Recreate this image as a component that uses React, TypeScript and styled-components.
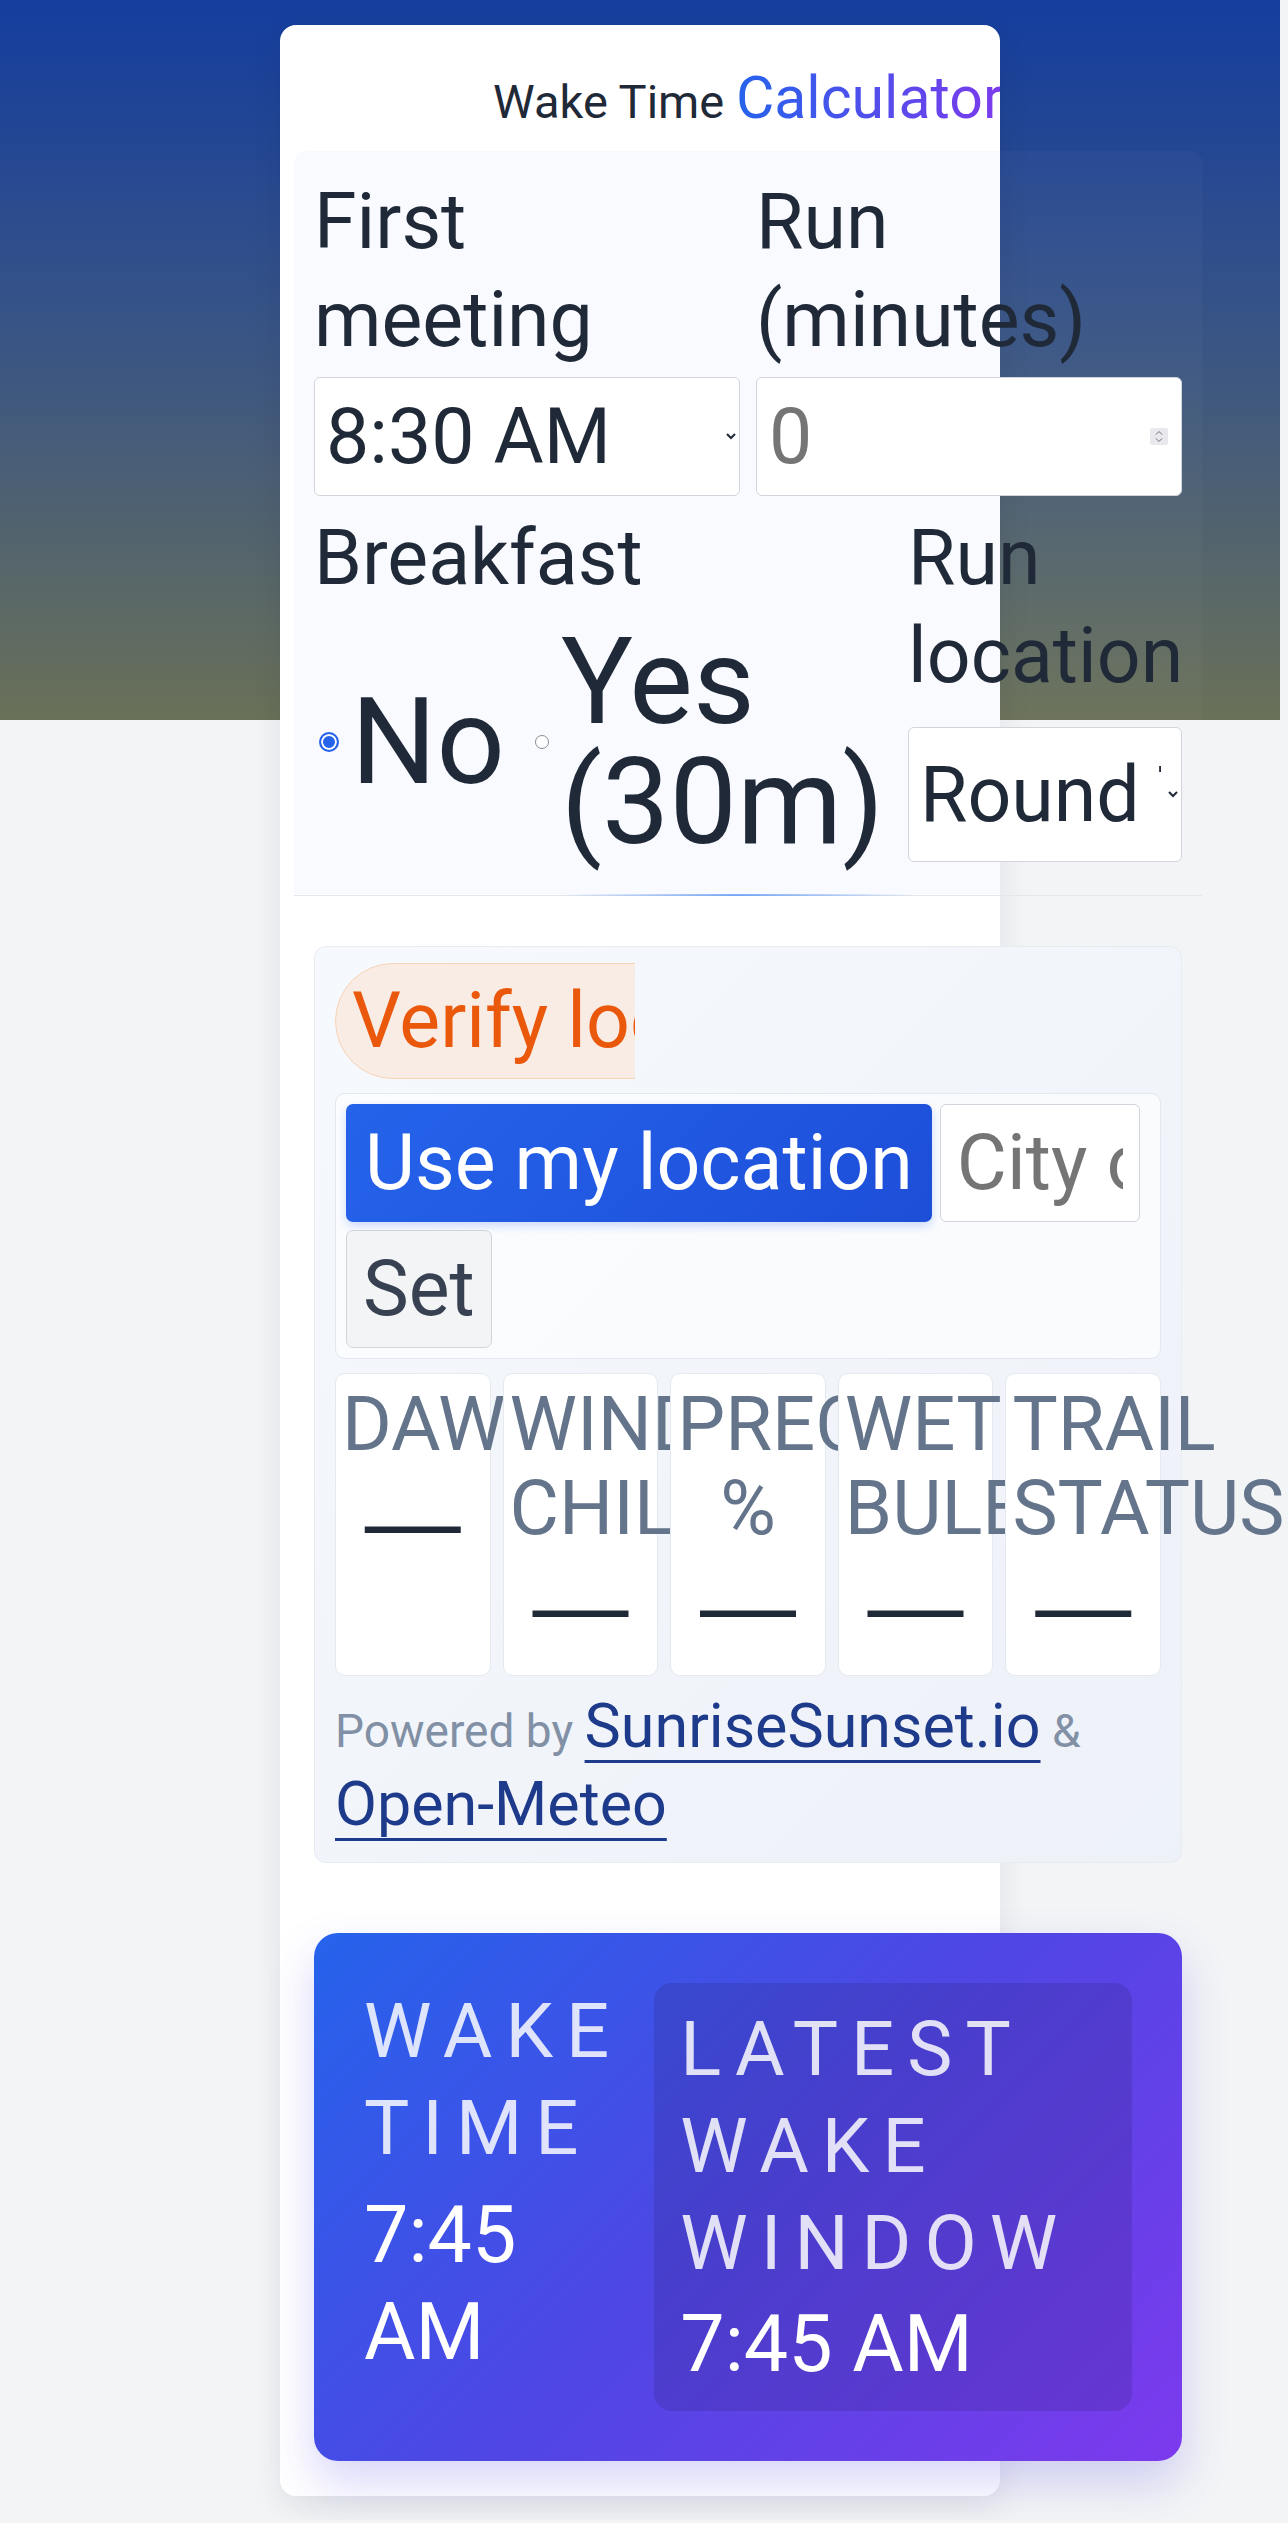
import React from "react";
import styled, { createGlobalStyle } from "styled-components";

const FONT = `Roboto, "Liberation Sans", Arial, sans-serif`;
const ARIAL = `"Liberation Sans", Arial, sans-serif`;

const GlobalStyle = createGlobalStyle`
  html, body { margin: 0; padding: 0; }
  body {
    background: #f3f4f6;
    font-family: ${FONT};
    color: #1f2937;
  }
  *, *::before, *::after { box-sizing: border-box; }
`;

const Page = styled.div`
  max-width: 1280px;
  padding: 25px 0 24px;
  background: linear-gradient(180deg, #143d9e 0%, #3a5584 48%, #6a7158 100%) top left / 1280px 720px no-repeat;
`;

const Card = styled.main`
  width: 720px;
  margin: 0 auto;
  background: #fff;
  border-radius: 16px;
  padding: 38px 0 35px 14px;
  box-shadow: 0 12px 32px rgba(15, 23, 42, 0.08);
`;

const TitleClip = styled.header`
  overflow: hidden;
  margin-bottom: 14px;
`;

const Title = styled.h1`
  width: 908px;
  margin: 0;
  text-align: center;
  font-size: 47px;
  font-weight: 400;
  line-height: 70px;
  color: #1f2937;
  white-space: nowrap;
`;

const Accent = styled.span`
  font-size: 59px;
  background: linear-gradient(90deg, #2563eb, #7c3aed);
  -webkit-background-clip: text;
  background-clip: text;
  color: transparent;
`;

const Content = styled.div`
  width: 908px;
`;

const FormSection = styled.section`
  display: flex;
  flex-direction: column;
  gap: 13px;
  padding: 22px 20px 32px;
  background: linear-gradient(
    90deg,
    rgba(150, 170, 255, 0.055) 0,
    rgba(150, 170, 255, 0.055) 706px,
    rgba(255, 255, 255, 0.022) 706px
  );
  border-radius: 12px 12px 0 0;
`;

const Row = styled.div<{ $cols: string; $gap: number }>`
  display: grid;
  grid-template-columns: ${(p) => p.$cols};
  column-gap: ${(p) => p.$gap}px;
`;

const Field = styled.div`
  display: flex;
  flex-direction: column;
  gap: 8px;
  min-width: 0;
`;

const Label = styled.label`
  font-size: 77px;
  line-height: 98px;
  color: #1f2937;
`;

const controlBase = `
  font-family: ${FONT};
  font-size: 77px;
  line-height: normal;
  color: #1f2937;
  background: #fff;
  border: 1px solid #d1d5db;
  border-radius: 6px;
  width: 100%;
  min-width: 0;
`;

const Select = styled.select<{ $h: number; $bottom?: boolean }>`
  ${controlBase}
  height: ${(p) => p.$h}px;
  padding: 0 4px 0 7px;
  margin-top: ${(p) => (p.$bottom ? "auto" : "0")};
`;

const NumberWrap = styled.div`
  position: relative;
`;

const NumberInput = styled.input`
  ${controlBase}
  height: 119px;
  padding: 0 40px 0 12px;
  &::-webkit-inner-spin-button { display: none; }
`;

const Spin = styled.span`
  position: absolute;
  right: 14px;
  top: 0;
  bottom: 0;
  margin: auto 0;
  width: 18px;
  height: 17px;
  border-radius: 2px;
  background: #e9e9ed;
  display: flex;
  align-items: center;
  justify-content: center;
  pointer-events: none;
`;

const RadioGroup = styled.div`
  display: flex;
  align-items: center;
  gap: 30px;
  padding-left: 5px;
  margin-top: 7px;
`;

const RadioOption = styled.label`
  display: flex;
  align-items: center;
  gap: 12px;
`;

const Radio = styled.input`
  appearance: none;
  -webkit-appearance: none;
  margin: 0;
  flex: none;
  width: 14px;
  height: 14px;
  border-radius: 50%;
  border: 1px solid #8a8a96;
  background: #fff;

  &:checked {
    width: 20px;
    height: 20px;
    border: 2px solid #2563eb;
    background: #2563eb;
    box-shadow: inset 0 0 0 2px #fff;
  }
`;

const RadioText = styled.span`
  font-size: 120px;
  line-height: 120px;
  color: #1f2937;
  width: min-content;
`;

const Divider = styled.div`
  height: 2px;
  background:
    linear-gradient(90deg, transparent 29%, rgba(59, 130, 246, 0.65) 49%, transparent 69%),
    linear-gradient(#e5e7eb, #e5e7eb) left bottom / 100% 1px no-repeat;
`;

const Lower = styled.div`
  padding: 0 20px;
`;

const LocationPanel = styled.section`
  margin-top: 50px;
  display: flex;
  flex-direction: column;
  gap: 14px;
  padding: 16px 20px 17px;
  border: 1px solid rgba(226, 232, 240, 0.7);
  border-radius: 12px;
  background: linear-gradient(135deg, #f6f9fd, #edf1f8);
`;

const PillClip = styled.div`
  width: 300px;
  overflow: hidden;
`;

const Pill = styled.span`
  display: inline-block;
  white-space: nowrap;
  padding: 12px 16px;
  font-size: 77px;
  line-height: normal;
  color: #ea580c;
  background: #f9ece4;
  border: 1px solid #f8d3b5;
  border-radius: 999px;
`;

const Controls = styled.div`
  display: flex;
  flex-wrap: wrap;
  gap: 8px;
  padding: 10px;
  background: rgba(255, 255, 255, 0.6);
  border: 1px solid #e2e8f0;
  border-radius: 10px;
`;

const Button = styled.button<{ $primary?: boolean }>`
  font-family: ${FONT};
  font-size: 77px;
  line-height: normal;
  border-radius: 7px;
  cursor: pointer;
  padding: ${(p) => (p.$primary ? "13px 19px" : "13px 16px")};
  color: ${(p) => (p.$primary ? "#fff" : "#374151")};
  background: ${(p) => (p.$primary ? "linear-gradient(135deg, #2563eb, #1d4ed8)" : "#f3f4f6")};
  border: ${(p) => (p.$primary ? "none" : "1px solid #d1d5db")};
  box-shadow: ${(p) => (p.$primary ? "0 4px 10px rgba(37, 99, 235, 0.22)" : "none")};
`;

const CityInput = styled.input`
  ${controlBase}
  width: 200px;
  height: 118px;
  padding: 0 16px;
`;

const Tiles = styled.div`
  display: grid;
  grid-template-columns: repeat(5, minmax(0, 1fr));
  gap: 12px;
`;

const Tile = styled.div`
  position: relative;
  background: #fff;
  border: 1px solid #e5e9f0;
  border-radius: 10px;
  padding: 8px 6px 15px;
  text-align: center;
`;

const TileLabel = styled.div`
  font-size: 76px;
  line-height: 84px;
  color: #64748b;
  text-transform: uppercase;
`;

const TileValue = styled.div`
  font-family: ${ARIAL};
  font-size: 96px;
  line-height: normal;
  color: #1f2937;
`;

const Attribution = styled.p`
  margin: 0;
  font-size: 46px;
  line-height: 72.5px;
  color: #8190a5;
`;

const Link = styled.a`
  font-size: 61px;
  color: #1e3a8a;
  text-decoration: underline;
  text-decoration-thickness: 3px;
  text-underline-offset: 13px;
`;

const Result = styled.section`
  margin-top: 70px;
  display: grid;
  grid-template-columns: min-content 1fr;
  column-gap: 32px;
  align-items: start;
  padding: 50px;
  border-radius: 24px;
  background: linear-gradient(135deg, #2563eb 0%, #4f46e5 50%, #7c3aed 100%);
  box-shadow: 0 22px 46px rgba(79, 70, 229, 0.22);
`;

const Stat = styled.div<{ $boxed?: boolean }>`
  display: flex;
  flex-direction: column;
  gap: ${(p) => (p.$boxed ? 4 : 10)}px;
  padding: ${(p) => (p.$boxed ? "18px 26px" : "0")};
  border-radius: 18px;
  background: ${(p) => (p.$boxed ? "rgba(30, 27, 75, 0.16)" : "transparent")};
`;

const StatLabel = styled.div`
  font-size: 76px;
  line-height: 97px;
  letter-spacing: 13px;
  text-transform: uppercase;
  color: rgba(255, 255, 255, 0.84);
`;

const StatValue = styled.div`
  font-size: 79px;
  line-height: 97px;
  color: #fff;
`;

export default function App() {
  const tiles = ["Dawn", "Wind chill", "Precip %", "Wet bulb", "Trail status"];
  return (
    <>
      <GlobalStyle />
      <Page>
        <Card>
          <TitleClip>
            <Title>
              Wake Time <Accent>Calculator</Accent>
            </Title>
          </TitleClip>
          <Content>
            <FormSection>
              <Row $cols="1fr 1fr" $gap={16}>
                <Field>
                  <Label htmlFor="meeting">First meeting</Label>
                  <Select id="meeting" $h={119} defaultValue="8:30 AM">
                    <option>8:00 AM</option>
                    <option>8:30 AM</option>
                    <option>9:00 AM</option>
                  </Select>
                </Field>
                <Field>
                  <Label htmlFor="run">Run (minutes)</Label>
                  <NumberWrap>
                    <NumberInput id="run" type="number" placeholder="0" />
                    <Spin>
                      <svg width="10" height="13" viewBox="0 0 10 13" fill="none" stroke="#6b6b73" strokeWidth="1">
                        <path d="M2 4.5 L5 1.5 L8 4.5" />
                        <path d="M2 8.5 L5 11.5 L8 8.5" />
                      </svg>
                    </Spin>
                  </NumberWrap>
                </Field>
              </Row>
              <Row $cols="570px 1fr" $gap={24}>
                <Field>
                  <Label as="span">Breakfast</Label>
                  <RadioGroup>
                    <RadioOption>
                      <Radio type="radio" name="breakfast" defaultChecked />
                      <RadioText>No</RadioText>
                    </RadioOption>
                    <RadioOption>
                      <Radio type="radio" name="breakfast" />
                      <RadioText>Yes (30m)</RadioText>
                    </RadioOption>
                  </RadioGroup>
                </Field>
                <Field>
                  <Label htmlFor="loc">Run location</Label>
                  <Select id="loc" $h={135} $bottom defaultValue="Round Trip">
                    <option>Round Trip</option>
                    <option>Out &amp; Back</option>
                    <option>Treadmill</option>
                  </Select>
                </Field>
              </Row>
            </FormSection>
            <Divider />
            <Lower>
              <LocationPanel>
                <PillClip>
                  <Pill>Verify location</Pill>
                </PillClip>
                <Controls>
                  <Button $primary>Use my location</Button>
                  <CityInput type="text" placeholder="City or ZIP" />
                  <Button>Set</Button>
                </Controls>
                <Tiles>
                  {tiles.map((t) => (
                    <Tile key={t}>
                      <TileLabel>{t}</TileLabel>
                      <TileValue>—</TileValue>
                    </Tile>
                  ))}
                </Tiles>
                <Attribution>
                  Powered by <Link href="#">SunriseSunset.io</Link> &amp; <Link href="#">Open-Meteo</Link>
                </Attribution>
              </LocationPanel>
              <Result>
                <Stat>
                  <StatLabel>Wake time</StatLabel>
                  <StatValue>7:45 AM</StatValue>
                </Stat>
                <Stat $boxed>
                  <StatLabel>Latest wake window</StatLabel>
                  <StatValue>7:45 AM</StatValue>
                </Stat>
              </Result>
            </Lower>
          </Content>
        </Card>
      </Page>
    </>
  );
}
